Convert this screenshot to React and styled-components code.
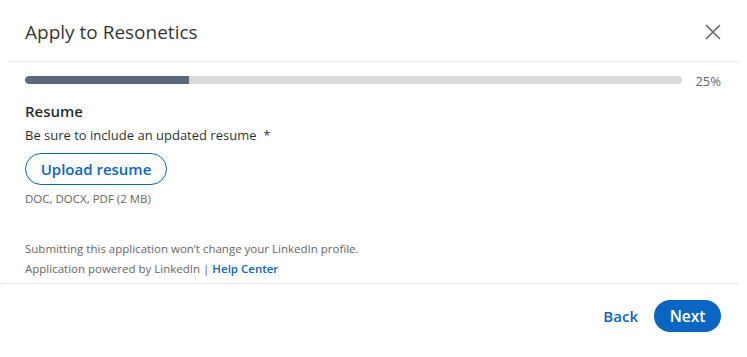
import React from "react";
import styled, { createGlobalStyle } from "styled-components";

const Global = createGlobalStyle`
  html, body { margin: 0; padding: 0; background: #fff; }
  body { font-family: "Open Sans", "Noto Sans", Arial, sans-serif; color: rgba(0,0,0,0.9); }
  * { box-sizing: border-box; }
`;

const Modal = styled.div`
  width: 746px;
  height: 357px;
  display: flex;
  flex-direction: column;
  background: #fff;
`;

const Header = styled.header`
  height: 61px;
  padding: 3px 25px 0 25px;
  display: flex;
  align-items: center;
  justify-content: space-between;
`;

const Title = styled.h2`
  margin: 0;
  font-size: 19px;
  font-weight: 400;
  line-height: 24px;
  color: rgba(0,0,0,0.82);
`;

const CloseButton = styled.button`
  width: 16px;
  height: 16px;
  padding: 0;
  border: none;
  background: none;
  display: flex;
  align-items: center;
  justify-content: center;
  color: #666;
  cursor: pointer;
`;

const Divider = styled.div`
  height: 1px;
  flex: 0 0 1px;
  background: #e8e8e8;
  margin: 0 7px 0 ${(p) => p.$left}px;
`;

const Body = styled.div`
  padding: 14px 25px 0 25px;
  display: flex;
  flex-direction: column;
  flex: 0 0 221px;
`;

const ProgressRow = styled.div`
  display: flex;
  align-items: center;
  gap: 13px;
  height: 8px;
`;

const Track = styled.div`
  flex: 1;
  height: 8px;
  border-radius: 4px;
  background: #d9d9d9;
  overflow: hidden;
`;

const Fill = styled.div`
  height: 100%;
  background: #56687a;
  border-radius: 4px 0 0 4px;
`;

const Percent = styled.span`
  font-size: 13px;
  line-height: 16px;
  color: #666;
  transform: translateY(1px);
`;

const SectionTitle = styled.h3`
  margin: 17px 0 0 0;
  font-size: 15px;
  font-weight: 600;
  line-height: 20px;
  color: rgba(0,0,0,0.85);
`;

const Hint = styled.p`
  margin: 4px 0 0 0;
  font-size: 13px;
  line-height: 20px;
  color: rgba(0,0,0,0.85);
`;

const UploadButton = styled.button`
  align-self: flex-start;
  margin-top: 8px;
  height: 32px;
  width: 142px;
  padding: 0;
  border: 1px solid #0a66c2;
  border-radius: 16px;
  background: #fff;
  color: #0a66c2;
  font-family: inherit;
  font-size: 15px;
  font-weight: 600;
  cursor: pointer;
`;

const Small = styled.p`
  margin: ${(p) => p.$mt || 0}px 0 0 0;
  font-size: 11.5px;
  line-height: 20px;
  color: #666;
`;

const Link = styled.a`
  color: #0a66c2;
  font-weight: 600;
  text-decoration: none;
`;

const Footer = styled.footer`
  display: flex;
  justify-content: flex-end;
  align-items: center;
  gap: 16px;
  padding: 16px 25px 0 25px;
`;

const TextButton = styled.button`
  border: none;
  background: none;
  padding: 0;
  color: #0a66c2;
  font-family: inherit;
  font-size: 15px;
  font-weight: 600;
  cursor: pointer;
`;

const PrimaryButton = styled.button`
  height: 32px;
  width: 67px;
  border: none;
  border-radius: 16px;
  background: #0a66c2;
  color: #fff;
  font-family: inherit;
  font-size: 15.5px;
  font-weight: 600;
  cursor: pointer;
`;

export default function App() {
  const progress = 25;
  return (
    <>
      <Global />
      <Modal>
        <Header>
          <Title>Apply to Resonetics</Title>
          <CloseButton aria-label="Dismiss">
            <svg width="16" height="16" viewBox="0 0 16 16" fill="none">
              <path d="M1 1L15 15M15 1L1 15" stroke="currentColor" strokeWidth="1.6" />
            </svg>
          </CloseButton>
        </Header>
        <Divider $left={8} />
        <Body>
          <ProgressRow>
            <Track>
              <Fill style={{ width: `${progress}%` }} />
            </Track>
            <Percent>{progress}%</Percent>
          </ProgressRow>
          <SectionTitle>Resume</SectionTitle>
          <Hint>Be sure to include an updated resume&nbsp; *</Hint>
          <UploadButton>Upload resume</UploadButton>
          <Small $mt={4}>DOC, DOCX, PDF (2 MB)</Small>
          <Small $mt={30}>Submitting this application won’t change your LinkedIn profile.</Small>
          <Small>
            Application powered by LinkedIn | <Link href="#">Help Center</Link>
          </Small>
        </Body>
        <Divider $left={2} />
        <Footer>
          <TextButton>Back</TextButton>
          <PrimaryButton>Next</PrimaryButton>
        </Footer>
      </Modal>
    </>
  );
}
